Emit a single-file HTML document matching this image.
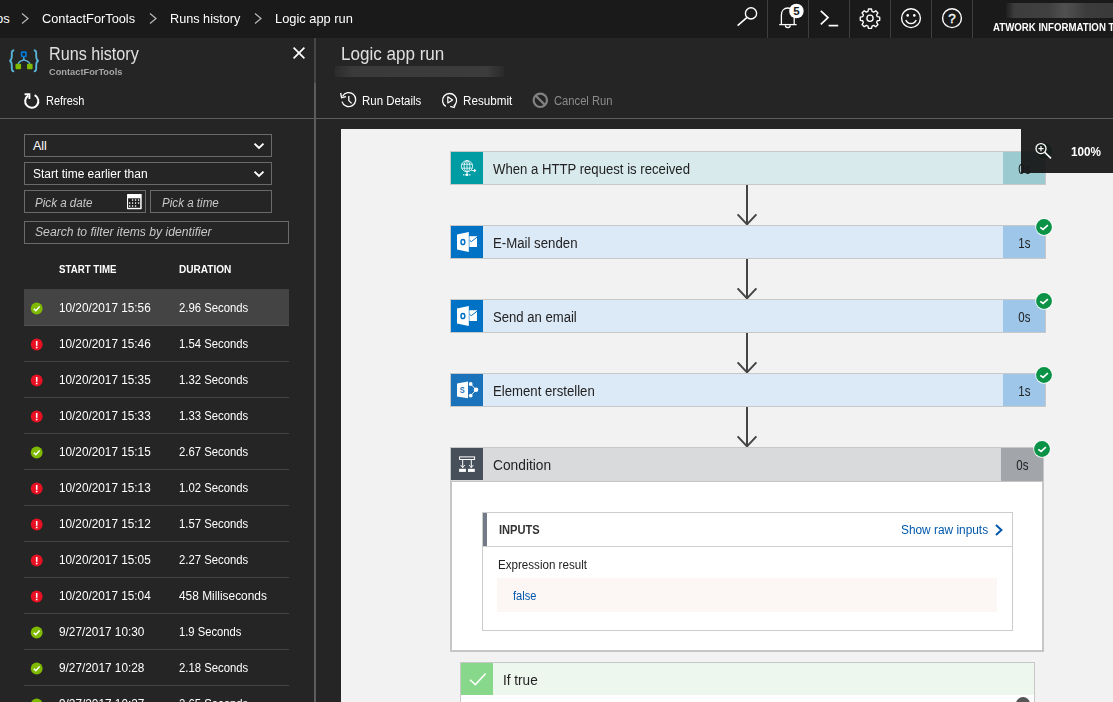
<!DOCTYPE html>
<html>
<head>
<meta charset="utf-8">
<title>Logic app run</title>
<style>
*{box-sizing:border-box;margin:0;padding:0}
html,body{width:1113px;height:702px;overflow:hidden;background:#252525;font-family:"Liberation Sans",sans-serif;color:#fff}
.abs,.t{position:absolute;white-space:nowrap}
.t{line-height:1;transform-origin:0 50%}
#topbar{left:0;top:0;width:1113px;height:38px;background:#1a1a1a}
.bc{font-size:13px;top:11.5px;color:#fff}
.chev{position:absolute;top:12px}
.tsep{position:absolute;top:0;width:1px;height:38px;background:#3e3e3e}
#left{left:0;top:38px;width:314px;height:664px;background:#252525}
#vsep{left:314px;top:38px;width:2px;height:664px;background:#5c5c5c}
#vsep2{left:314px;top:38px;width:2px;height:45px;background:#454545}
#hline{left:0;top:118px;width:1113px;height:1px;background:#5c5c5c}
#canvas{left:341px;top:129px;width:772px;height:573px;background:#f2f2f2;overflow:hidden}
.inp{position:absolute;border:1px solid #6a6a6a;background:#252525;height:22px}
.ph{font-style:italic;color:#c8c8c8;font-size:12px}
.row{position:absolute;left:24px;width:265px;height:36px;border-bottom:1px solid #444}
.row .t{font-size:12px;top:11.5px;color:#fff}
.row.sel{background:#444;border-bottom:1px solid #525252}
.row.sel .t{top:12.5px}
.row.sel svg{margin-top:1px}
.card{position:absolute;left:109px;width:596px;height:34px;border:1px solid #c8c8c8}
.card .ic{position:absolute;left:0;top:0;width:32px;height:32px}
.card .ttl{transform-origin:0 50%;position:absolute;left:42px;top:10px;font-size:14px;color:#222;line-height:1;white-space:nowrap}
.card .dur span,#cd5{display:inline-block;transform-origin:50% 50%;transform:scaleX(.82)}
.card .dur{position:absolute;right:0;top:0;width:42px;height:32px;font-size:14px;color:#222;text-align:center;line-height:34px}
.ok{position:absolute;width:17px;height:17px;border-radius:50%;background:#0a8a43;border:1px solid #fff}
</style>
</head>
<body>
<!-- TOP BAR -->
<div id="topbar" class="abs">
  <span class="t bc" style="left:-4px">os</span>
  <span class="t bc" id="bc1" style="transform:scaleX(0.9836);left:42px">ContactForTools</span>
  <span class="t bc" id="bc2" style="transform:scaleX(0.9744);left:170px">Runs history</span>
  <span class="t bc" id="bc3" style="transform:scaleX(0.9888);left:275px">Logic app run</span>
  <svg class="chev" style="left:19.5px" width="10" height="13" viewBox="0 0 10 13"><path d="M2 1.5 L8 6.5 L2 11.5" fill="none" stroke="#bbb" stroke-width="1.2"/></svg>
  <svg class="chev" style="left:148px" width="10" height="13" viewBox="0 0 10 13"><path d="M2 1.5 L8 6.5 L2 11.5" fill="none" stroke="#bbb" stroke-width="1.2"/></svg>
  <svg class="chev" style="left:253px" width="10" height="13" viewBox="0 0 10 13"><path d="M2 1.5 L8 6.5 L2 11.5" fill="none" stroke="#bbb" stroke-width="1.2"/></svg>

  <div class="tsep" style="left:767px"></div><div class="tsep" style="left:808px"></div><div class="tsep" style="left:849px"></div><div class="tsep" style="left:890px"></div><div class="tsep" style="left:931px"></div><div class="tsep" style="left:972px"></div>
  <svg class="abs" style="left:732px;top:4px" width="32" height="30" viewBox="0 0 32 30"><circle cx="19" cy="9.4" r="5.6" fill="none" stroke="#fff" stroke-width="1.4"/><path d="M14.8 13.6 L5.6 21.6" stroke="#fff" stroke-width="1.6" fill="none"/></svg>
  <svg class="abs" style="left:774px;top:2px" width="34" height="32" viewBox="0 0 34 32"><path d="M7.4 22.6 V13 C7.4 8.6 10.2 6 13.8 6 C17.4 6 20.2 8.6 20.2 13 V22.6" fill="none" stroke="#fff" stroke-width="1.3"/><path d="M5.2 22.6 H22.6" stroke="#fff" stroke-width="1.3"/><path d="M11.4 23.2 A2.4 2.4 0 0 0 16.2 23.2" fill="none" stroke="#fff" stroke-width="1.3"/><circle cx="22.4" cy="9" r="7.3" fill="#fff"/><text x="22.4" y="13" font-family="Liberation Sans, sans-serif" font-size="11.5" font-weight="bold" fill="#1a1a1a" text-anchor="middle">5</text></svg>
  <svg class="abs" style="left:816px;top:6px" width="28" height="24" viewBox="0 0 28 24"><path d="M4.8 4.8 L12 11.6 L4.8 18.4" fill="none" stroke="#fff" stroke-width="1.7"/><path d="M12.6 19.6 H22.2" stroke="#fff" stroke-width="1.7"/></svg>
  <svg class="abs" style="left:859px;top:7px" width="22" height="22" viewBox="0 0 24 24"><g fill="none" stroke="#fff" stroke-width="1.45" stroke-linejoin="round"><path d="M10.3 2.2 h3.4 l.5 2.6 1.9 .8 2.2-1.5 2.4 2.4-1.5 2.2 .8 1.9 2.6 .5 v3.4 l-2.6 .5 -.8 1.9 1.5 2.2 -2.4 2.4 -2.2-1.5 -1.9 .8 -.5 2.6 h-3.4 l-.5-2.6 -1.9-.8 -2.2 1.5 -2.4-2.4 1.5-2.2 -.8-1.9 -2.6-.5 v-3.4 l2.6-.5 .8-1.9 -1.5-2.2 2.4-2.4 2.2 1.5 1.9-.8z"/><circle cx="12" cy="12.2" r="3.4"/></g></svg>
  <svg class="abs" style="left:899px;top:6px" width="24" height="24" viewBox="0 0 24 24"><circle cx="12" cy="12.2" r="9.4" fill="none" stroke="#fff" stroke-width="1.4"/><circle cx="8.7" cy="9.4" r="1.3" fill="#fff"/><circle cx="15.3" cy="9.4" r="1.3" fill="#fff"/><path d="M6.8 14 A5.6 5.6 0 0 0 17.2 14" fill="none" stroke="#fff" stroke-width="1.4"/></svg>
  <svg class="abs" style="left:940px;top:6px" width="24" height="24" viewBox="0 0 24 24"><circle cx="12" cy="12.2" r="9.4" fill="none" stroke="#fff" stroke-width="1.4"/><text x="12" y="17" font-family="Liberation Sans, sans-serif" font-size="13.5" fill="#fff" stroke="#fff" stroke-width=".35" text-anchor="middle">?</text></svg>
  <div class="abs" style="left:1006px;top:3px;width:107px;height:15px;background:linear-gradient(90deg,#1f1f1f 0%,#3d3d3d 8%,#404040 40%,#505050 55%,#4a4a4a 62%,#3c3c3c 75%,#3a3a3a 100%);filter:blur(.6px)"></div>
  <span class="t" id="org" style="left:993px;top:23.2px;font-size:10px;font-weight:bold;color:#fff;transform:scaleX(.966)">ATWORK INFORMATION TECHNOLOGY</span>
</div>

<!-- LEFT BLADE -->

<div id="left" class="abs">
  <!-- logic app icon -->
  <svg class="abs" style="left:6px;top:8px" width="36" height="30" viewBox="0 0 36 30">
    <g fill="none" stroke="#59b4d9" stroke-width="1.9">
      <path d="M8.2 4.2 C5.4 4.2 5.8 6.6 5.8 9.4 C5.8 12.2 5.6 14.4 3.4 14.8 C5.6 15.2 5.8 17.4 5.8 20.2 C5.8 23 5.4 25.4 8.2 25.4"/>
      <path d="M27.8 4.2 C30.6 4.2 30.2 6.6 30.2 9.4 C30.2 12.2 30.4 14.4 32.6 14.8 C30.4 15.2 30.2 17.4 30.2 20.2 C30.2 23 30.6 25.4 27.8 25.4"/>
      <path d="M17.8 10.6 V13.6 M17.8 13.6 C17 15 12.4 14.6 12.3 18 M17.8 13.6 C18.6 15 23.6 14.6 23.7 18" stroke-width="1.4"/>
    </g>
    <rect x="15.6" y="6.1" width="4.4" height="4.4" fill="none" stroke="#0078d7" stroke-width="1.7" rx=".6"/>
    <rect x="9.5" y="17.7" width="5.6" height="5.6" rx="1" fill="#7fba00"/>
    <rect x="21" y="17.7" width="5.6" height="5.6" rx="1" fill="#7fba00"/>
  </svg>
  <span class="t" id="ttl1" style="transform:scaleX(0.8976);left:49px;top:6.8px;font-size:18px;color:#e0e0e0">Runs history</span>
  <span class="t" id="sub1" style="transform:scaleX(0.9748);left:49px;top:29px;font-size:9.5px;font-weight:bold;color:#a6a6a6">ContactForTools</span>
  <svg class="abs" style="left:292px;top:8px" width="14" height="14" viewBox="0 0 14 14"><path d="M1.6 1.6 L12.4 12.4 M12.4 1.6 L1.6 12.4" stroke="#fff" stroke-width="1.7" fill="none"/></svg>
  <!-- refresh -->
  <svg class="abs" style="left:22px;top:53px" width="20" height="20" viewBox="0 0 20 20"><path d="M6.2 4.6 A6.6 6.6 0 1 0 12.6 4.2" fill="none" stroke="#fff" stroke-width="2"/><path d="M2.6 3.2 H7.4 V8" fill="none" stroke="#fff" stroke-width="1.9"/></svg>
  <span class="t" id="refresh" style="transform:scaleX(0.8771);left:45.6px;top:57px;font-size:12.5px">Refresh</span>

  <div class="inp" style="left:24px;top:96px;width:248px;height:23px"><span class="t" id="sel1" style="left:8px;top:5px;font-size:12.5px">All</span>
    <svg class="abs" style="left:228px;top:7px" width="12" height="9" viewBox="0 0 12 9"><path d="M1.5 1.6 L6 5.9 L10.5 1.6" fill="none" stroke="#fff" stroke-width="1.9"/></svg></div>
  <div class="inp" style="left:24px;top:124px;width:248px;height:23px"><span class="t" id="sel2" style="transform:scaleX(0.9590);left:8px;top:5px;font-size:12.5px">Start time earlier than</span>
    <svg class="abs" style="left:228px;top:7px" width="12" height="9" viewBox="0 0 12 9"><path d="M1.5 1.6 L6 5.9 L10.5 1.6" fill="none" stroke="#fff" stroke-width="1.9"/></svg></div>
  <div class="inp" style="left:24px;top:152px;width:122px;height:23px"><span class="t ph" id="pdate" style="transform:scaleX(0.9684);left:10px;top:6px">Pick a date</span>
    <svg class="abs" style="left:102px;top:3px" width="16" height="16" viewBox="0 0 16 16"><rect x="0" y="0" width="14.7" height="15.2" rx=".6" fill="#fff"/><rect x="1.1" y="4.3" width="12.1" height="9.5" fill="#1e1e1e"/><g fill="#fff"><circle cx="5.6" cy="6.1" r=".8"/><circle cx="8.6" cy="6.1" r=".8"/><circle cx="11.6" cy="6.1" r=".8"/><circle cx="2.7" cy="9.1" r=".8"/><circle cx="5.6" cy="9.1" r=".8"/><circle cx="8.6" cy="9.1" r=".8"/><circle cx="11.6" cy="9.1" r=".8"/><circle cx="2.7" cy="12.1" r=".8"/><circle cx="5.6" cy="12.1" r=".8"/><circle cx="8.6" cy="12.1" r=".8"/></g></svg></div>
  <div class="inp" style="left:150px;top:152px;width:122px;height:23px"><span class="t ph" id="ptime" style="transform:scaleX(0.9678);left:11px;top:6px">Pick a time</span></div>
  <div class="inp" style="left:24px;top:183px;width:265px;height:23px"><span class="t ph" id="psearch" style="transform:scaleX(1.0145);left:10px;top:4px">Search to filter items by identifier</span></div>

  <span class="t" id="h1" style="transform:scaleX(0.9242);left:59px;top:226.3px;font-size:10.5px;font-weight:bold">START TIME</span>
  <span class="t" id="h2" style="transform:scaleX(0.9590);left:179px;top:226.3px;font-size:10.5px;font-weight:bold">DURATION</span>
<div class="row sel" style="top:251px;height:37px"><svg class="abs" style="left:6.4px;top:11.5px" width="13" height="13" viewBox="0 0 13 13"><circle cx="6.7" cy="6.5" r="5.9" fill="#7fba00"/><path d="M3.8 6.7 L5.8 8.7 L9.6 4.5" fill="none" stroke="#fff" stroke-width="1.5"/></svg><span class="t" id="d0" style="transform:scaleX(0.9816);left:35px">10/20/2017 15:56</span><span class="t" id="u0" style="transform:scaleX(0.9429);left:155px">2.96 Seconds</span></div>
<div class="row" style="top:288px"><svg class="abs" style="left:6.4px;top:11.5px" width="13" height="13" viewBox="0 0 13 13"><circle cx="6.7" cy="6.5" r="5.9" fill="#e81123"/><rect x="5.9" y="3" width="1.6" height="4.8" fill="#fff"/><rect x="5.9" y="8.7" width="1.6" height="1.6" fill="#fff"/></svg><span class="t" id="d1" style="transform:scaleX(0.9816);left:35px">10/20/2017 15:46</span><span class="t" id="u1" style="transform:scaleX(0.9429);left:155px">1.54 Seconds</span></div>
<div class="row" style="top:324px"><svg class="abs" style="left:6.4px;top:11.5px" width="13" height="13" viewBox="0 0 13 13"><circle cx="6.7" cy="6.5" r="5.9" fill="#e81123"/><rect x="5.9" y="3" width="1.6" height="4.8" fill="#fff"/><rect x="5.9" y="8.7" width="1.6" height="1.6" fill="#fff"/></svg><span class="t" id="d2" style="transform:scaleX(0.9816);left:35px">10/20/2017 15:35</span><span class="t" id="u2" style="transform:scaleX(0.9429);left:155px">1.32 Seconds</span></div>
<div class="row" style="top:360px"><svg class="abs" style="left:6.4px;top:11.5px" width="13" height="13" viewBox="0 0 13 13"><circle cx="6.7" cy="6.5" r="5.9" fill="#e81123"/><rect x="5.9" y="3" width="1.6" height="4.8" fill="#fff"/><rect x="5.9" y="8.7" width="1.6" height="1.6" fill="#fff"/></svg><span class="t" id="d3" style="transform:scaleX(0.9816);left:35px">10/20/2017 15:33</span><span class="t" id="u3" style="transform:scaleX(0.9429);left:155px">1.33 Seconds</span></div>
<div class="row" style="top:396px"><svg class="abs" style="left:6.4px;top:11.5px" width="13" height="13" viewBox="0 0 13 13"><circle cx="6.7" cy="6.5" r="5.9" fill="#7fba00"/><path d="M3.8 6.7 L5.8 8.7 L9.6 4.5" fill="none" stroke="#fff" stroke-width="1.5"/></svg><span class="t" id="d4" style="transform:scaleX(0.9816);left:35px">10/20/2017 15:15</span><span class="t" id="u4" style="transform:scaleX(0.9429);left:155px">2.67 Seconds</span></div>
<div class="row" style="top:432px"><svg class="abs" style="left:6.4px;top:11.5px" width="13" height="13" viewBox="0 0 13 13"><circle cx="6.7" cy="6.5" r="5.9" fill="#e81123"/><rect x="5.9" y="3" width="1.6" height="4.8" fill="#fff"/><rect x="5.9" y="8.7" width="1.6" height="1.6" fill="#fff"/></svg><span class="t" id="d5" style="transform:scaleX(0.9816);left:35px">10/20/2017 15:13</span><span class="t" id="u5" style="transform:scaleX(0.9429);left:155px">1.02 Seconds</span></div>
<div class="row" style="top:468px"><svg class="abs" style="left:6.4px;top:11.5px" width="13" height="13" viewBox="0 0 13 13"><circle cx="6.7" cy="6.5" r="5.9" fill="#e81123"/><rect x="5.9" y="3" width="1.6" height="4.8" fill="#fff"/><rect x="5.9" y="8.7" width="1.6" height="1.6" fill="#fff"/></svg><span class="t" id="d6" style="transform:scaleX(0.9816);left:35px">10/20/2017 15:12</span><span class="t" id="u6" style="transform:scaleX(0.9429);left:155px">1.57 Seconds</span></div>
<div class="row" style="top:504px"><svg class="abs" style="left:6.4px;top:11.5px" width="13" height="13" viewBox="0 0 13 13"><circle cx="6.7" cy="6.5" r="5.9" fill="#e81123"/><rect x="5.9" y="3" width="1.6" height="4.8" fill="#fff"/><rect x="5.9" y="8.7" width="1.6" height="1.6" fill="#fff"/></svg><span class="t" id="d7" style="transform:scaleX(0.9816);left:35px">10/20/2017 15:05</span><span class="t" id="u7" style="transform:scaleX(0.9429);left:155px">2.27 Seconds</span></div>
<div class="row" style="top:540px"><svg class="abs" style="left:6.4px;top:11.5px" width="13" height="13" viewBox="0 0 13 13"><circle cx="6.7" cy="6.5" r="5.9" fill="#e81123"/><rect x="5.9" y="3" width="1.6" height="4.8" fill="#fff"/><rect x="5.9" y="8.7" width="1.6" height="1.6" fill="#fff"/></svg><span class="t" id="d8" style="transform:scaleX(0.9816);left:35px">10/20/2017 15:04</span><span class="t" id="u8" style="transform:scaleX(0.9908);left:155px">458 Milliseconds</span></div>
<div class="row" style="top:576px"><svg class="abs" style="left:6.4px;top:11.5px" width="13" height="13" viewBox="0 0 13 13"><circle cx="6.7" cy="6.5" r="5.9" fill="#7fba00"/><path d="M3.8 6.7 L5.8 8.7 L9.6 4.5" fill="none" stroke="#fff" stroke-width="1.5"/></svg><span class="t" id="d9" style="transform:scaleX(0.9844);left:35px">9/27/2017 10:30</span><span class="t" id="u9" style="transform:scaleX(0.9353);left:155px">1.9 Seconds</span></div>
<div class="row" style="top:612px"><svg class="abs" style="left:6.4px;top:11.5px" width="13" height="13" viewBox="0 0 13 13"><circle cx="6.7" cy="6.5" r="5.9" fill="#7fba00"/><path d="M3.8 6.7 L5.8 8.7 L9.6 4.5" fill="none" stroke="#fff" stroke-width="1.5"/></svg><span class="t" id="d10" style="transform:scaleX(0.9844);left:35px">9/27/2017 10:28</span><span class="t" id="u10" style="transform:scaleX(0.9429);left:155px">2.18 Seconds</span></div>
<div class="row" style="top:648px"><svg class="abs" style="left:6.4px;top:11.5px" width="13" height="13" viewBox="0 0 13 13"><circle cx="6.7" cy="6.5" r="5.9" fill="#7fba00"/><path d="M3.8 6.7 L5.8 8.7 L9.6 4.5" fill="none" stroke="#fff" stroke-width="1.5"/></svg><span class="t" id="d11" style="transform:scaleX(0.9844);left:35px">9/27/2017 10:27</span><span class="t" id="u11" style="transform:scaleX(0.9429);left:155px">2.65 Seconds</span></div>
</div>

<div id="vsep" class="abs"></div>
<div id="vsep2" class="abs"></div>
<div id="hline" class="abs"></div>

<!-- CANVAS -->

<!-- RIGHT BLADE HEADER -->
<span class="t" id="ttl2" style="transform:scaleX(0.9469);left:341px;top:44.9px;font-size:18px;color:#e0e0e0">Logic app run</span>
<div class="abs" style="left:335px;top:66px;width:169px;height:11px;background:linear-gradient(90deg,#2c2c2c,#3a3a3a 10%,#3c3c3c 90%,#2a2a2a);filter:blur(.5px)"></div>
<svg class="abs" style="left:339px;top:91px" width="20" height="19" viewBox="0 0 20 19"><path d="M3.6 5.2 A7 7 0 1 1 3 10.6" fill="none" stroke="#fff" stroke-width="1.3"/><path d="M1.6 2 L2.6 6.6 L7 5.6" fill="none" stroke="#fff" stroke-width="1.3"/><path d="M9.8 5 V9.6 L12.6 12.4" fill="none" stroke="#fff" stroke-width="1.3"/></svg>
<span class="t" id="a1" style="transform:scaleX(0.9176);left:362px;top:95px;font-size:12.5px">Run Details</span>
<svg class="abs" style="left:440px;top:91px" width="20" height="19" viewBox="0 0 20 19"><path d="M5.8 15.4 A7 7 0 1 1 13.6 15.2" fill="none" stroke="#fff" stroke-width="1.3"/><path d="M15.6 12.4 L14.2 16.6 L10.2 15.4" fill="none" stroke="#fff" stroke-width="1.2"/><path d="M7.8 5.8 V12 L12.6 8.9 Z" fill="none" stroke="#fff" stroke-width="1.2" stroke-linejoin="round"/></svg>
<span class="t" id="a2" style="transform:scaleX(0.9338);left:463px;top:95px;font-size:12.5px">Resubmit</span>
<svg class="abs" style="left:531px;top:91px" width="19" height="19" viewBox="0 0 19 19"><circle cx="9.3" cy="9.3" r="6.7" fill="none" stroke="#828282" stroke-width="2.2"/><path d="M4.6 4.6 L14 14" stroke="#828282" stroke-width="2.2"/></svg>
<span class="t" id="a3" style="transform:scaleX(0.8955);left:553.5px;top:95px;font-size:12.5px;color:#8c8c8c">Cancel Run</span>
<div id="canvas" class="abs">
<div class="card" style="top:22px;background:#d9eaed"><div class="ic" style="background:#009ca3"><svg width="32" height="32" viewBox="0 0 32 32"><g fill="none" stroke="#fff" stroke-width=".8"><circle cx="16" cy="14.2" r="5.6"/><ellipse cx="16" cy="14.2" rx="2.9" ry="5.6"/><path d="M10.6 12.2 H21.4 M10.6 16.2 H21.4 M16 8.6 V22"/></g><path d="M20.4 18.6 H24" stroke="#fff" stroke-width=".9"/><path d="M23 16.8 L25.4 18.6 L23 20.4Z" fill="#fff"/><path d="M12.2 22.8 H19.8" stroke="#fff" stroke-width="1.2" stroke-dasharray="1.2 .8"/><circle cx="16" cy="22.8" r="1.2" fill="#fff"/></svg></div><span class="ttl" id="c1" style="transform:scaleX(0.9388)">When a HTTP request is received</span><div class="dur" style="background:#9bcbd1"><span id="cd1">0s</span></div></div>
<svg class="abs" style="left:693px;top:12.3px" width="20" height="20" viewBox="0 0 20 20"><circle cx="10" cy="10" r="8.7" fill="#fff"/><circle cx="10" cy="10" r="7.95" fill="#0a9347"/><path d="M6.3 10.3 L9.1 12.5 L13.9 8.2" fill="none" stroke="#fff" stroke-width="1.7"/></svg>
<svg class="abs" style="left:394px;top:56px" width="24" height="41" viewBox="0 0 24 41"><path d="M12 0 V39" stroke="#444" stroke-width="2"/><path d="M2.6 29.4 L12 39.4 L21.4 29.4" fill="none" stroke="#444" stroke-width="2"/></svg>
<div class="card" style="top:96px;background:#dce9f6"><div class="ic" style="background:#0072c6"><svg width="32" height="32" viewBox="0 0 32 32"><path d="M6 8.4 L17.8 6 V26 L6 23.6Z" fill="#fff"/><rect x="18.4" y="10.2" width="7.6" height="10.8" fill="#fff"/><path d="M18.6 14.4 L20.4 15.6 L26 11.2" fill="none" stroke="#0072c6" stroke-width="1"/><ellipse cx="11.9" cy="16" rx="1.9" ry="2.6" fill="none" stroke="#0072c6" stroke-width="1.5"/></svg></div><span class="ttl" id="c2" style="transform:scaleX(0.9441)">E-Mail senden</span><div class="dur" style="background:#9dc6e9"><span id="cd2">1s</span></div></div>
<svg class="abs" style="left:693px;top:88.3px" width="20" height="20" viewBox="0 0 20 20"><circle cx="10" cy="10" r="8.7" fill="#fff"/><circle cx="10" cy="10" r="7.95" fill="#0a9347"/><path d="M6.3 10.3 L9.1 12.5 L13.9 8.2" fill="none" stroke="#fff" stroke-width="1.7"/></svg>
<svg class="abs" style="left:394px;top:130px" width="24" height="41" viewBox="0 0 24 41"><path d="M12 0 V39" stroke="#444" stroke-width="2"/><path d="M2.6 29.4 L12 39.4 L21.4 29.4" fill="none" stroke="#444" stroke-width="2"/></svg>
<div class="card" style="top:170px;background:#dce9f6"><div class="ic" style="background:#0072c6"><svg width="32" height="32" viewBox="0 0 32 32"><path d="M6 8.4 L17.8 6 V26 L6 23.6Z" fill="#fff"/><rect x="18.4" y="10.2" width="7.6" height="10.8" fill="#fff"/><path d="M18.6 14.4 L20.4 15.6 L26 11.2" fill="none" stroke="#0072c6" stroke-width="1"/><ellipse cx="11.9" cy="16" rx="1.9" ry="2.6" fill="none" stroke="#0072c6" stroke-width="1.5"/></svg></div><span class="ttl" id="c3" style="transform:scaleX(0.9361)">Send an email</span><div class="dur" style="background:#9dc6e9"><span id="cd3">0s</span></div></div>
<svg class="abs" style="left:693px;top:162.3px" width="20" height="20" viewBox="0 0 20 20"><circle cx="10" cy="10" r="8.7" fill="#fff"/><circle cx="10" cy="10" r="7.95" fill="#0a9347"/><path d="M6.3 10.3 L9.1 12.5 L13.9 8.2" fill="none" stroke="#fff" stroke-width="1.7"/></svg>
<svg class="abs" style="left:394px;top:204px" width="24" height="41" viewBox="0 0 24 41"><path d="M12 0 V39" stroke="#444" stroke-width="2"/><path d="M2.6 29.4 L12 39.4 L21.4 29.4" fill="none" stroke="#444" stroke-width="2"/></svg>
<div class="card" style="top:244px;background:#dce9f6"><div class="ic" style="background:#1a73ba"><svg width="32" height="32" viewBox="0 0 32 32"><path d="M19.6 10 L25.2 15.8 L19.6 21.6" fill="none" stroke="#fff" stroke-width=".9"/><circle cx="19.7" cy="10" r="1.9" fill="#fff"/><circle cx="19.7" cy="21.6" r="1.9" fill="#fff"/><circle cx="25" cy="15.8" r="2.3" fill="#fff"/><path d="M6 9.4 L17 7.4 V24.2 L6 22.6Z" fill="#fff"/><text transform="translate(11.3 19) scale(.8 1)" x="0" y="0" font-family="Liberation Sans, sans-serif" font-size="9.2" font-weight="bold" fill="#1a73ba" text-anchor="middle">S</text></svg></div><span class="ttl" id="c4" style="transform:scaleX(0.9402)">Element erstellen</span><div class="dur" style="background:#9dc6e9"><span id="cd4">1s</span></div></div>
<svg class="abs" style="left:693px;top:236.3px" width="20" height="20" viewBox="0 0 20 20"><circle cx="10" cy="10" r="8.7" fill="#fff"/><circle cx="10" cy="10" r="7.95" fill="#0a9347"/><path d="M6.3 10.3 L9.1 12.5 L13.9 8.2" fill="none" stroke="#fff" stroke-width="1.7"/></svg>
<svg class="abs" style="left:394px;top:278px" width="24" height="41" viewBox="0 0 24 41"><path d="M12 0 V39" stroke="#444" stroke-width="2"/><path d="M2.6 29.4 L12 39.4 L21.4 29.4" fill="none" stroke="#444" stroke-width="2"/></svg>
<div class="abs" style="left:109px;top:318px;width:594px;height:205px;background:#fff;border:2px solid #c6c6c6;border-top:1px solid #c8c8c8"></div>
<div class="abs" style="left:110px;top:319px;width:592px;height:34px;background:#d9dadc;border-bottom:1px solid #c4c4c4"></div>
<div class="abs" style="left:110px;top:319px;width:32px;height:32px;background:#474f5a"><svg width="32" height="32" viewBox="0 0 32 32"><rect x="8.6" y="8.9" width="15" height="2.6" fill="none" stroke="#fff" stroke-width="1"/><path d="M11.7 11.6 V19.6 M20.3 11.6 V19.6" stroke="#fff" stroke-width="1"/><path d="M9.6 17 L11.7 19.6 L13.8 17 M18.2 17 L20.3 19.6 L22.4 17" fill="none" stroke="#fff" stroke-width=".9"/><rect x="8.1" y="20.8" width="6.8" height="3.1" fill="#fff"/><rect x="17" y="20.8" width="6.8" height="3.1" fill="#fff"/></svg></div>
<span class="t" id="c5" style="transform:scaleX(0.9838);left:152px;top:329px;font-size:14px;color:#222">Condition</span>
<div class="abs" style="left:660px;top:319px;width:42px;height:33px;background:#a2a5a9;color:#222;font-size:14px;text-align:center;line-height:35px"><span id="cd5">0s</span></div>
<svg class="abs" style="left:691px;top:310.3px" width="20" height="20" viewBox="0 0 20 20"><circle cx="10" cy="10" r="8.7" fill="#fff"/><circle cx="10" cy="10" r="7.95" fill="#0a9347"/><path d="M6.3 10.3 L9.1 12.5 L13.9 8.2" fill="none" stroke="#fff" stroke-width="1.7"/></svg>

<div class="abs" style="left:141px;top:383px;width:531px;height:119px;background:#fff;border:1px solid #ccc"></div>
<div class="abs" style="left:142px;top:384px;width:4px;height:33px;background:#737b87"></div>
<div class="abs" style="left:142px;top:417px;width:529px;height:1px;background:#d0d0d0"></div>
<span class="t" id="inputs" style="transform:scaleX(0.9269);left:157.5px;top:395px;font-size:12px;font-weight:bold;color:#333">INPUTS</span>
<span class="t" id="raw" style="transform:scaleX(0.9892);left:560px;top:395px;font-size:12px;color:#0058ad">Show raw inputs</span>
<svg class="abs" style="left:653px;top:395px" width="10" height="12" viewBox="0 0 10 12"><path d="M2 1 L7.4 6 L2 11" fill="none" stroke="#0058ad" stroke-width="2"/></svg>
<span class="t" id="expr" style="transform:scaleX(0.9669);left:156.5px;top:430px;font-size:12px;color:#222">Expression result</span>
<div class="abs" style="left:156px;top:449px;width:500px;height:34px;background:#fcf6f5"></div>
<span class="t" id="false" style="transform:scaleX(0.9227);left:171.5px;top:461px;font-size:12px;color:#0058ad">false</span>
<!-- If true -->
<div class="abs" style="left:119px;top:533px;width:575px;height:60px;background:#fff;border:1px solid #c8c8c8"></div>
<div class="abs" style="left:120px;top:534px;width:573px;height:32px;background:#edf7ee"></div>
<div class="abs" style="left:120px;top:534px;width:32px;height:32px;background:#88d88c"><svg width="32" height="32" viewBox="0 0 32 32"><path d="M9 16.8 L14.4 21.6 L24.6 10.6" fill="none" stroke="#fff" stroke-width="1.5"/></svg></div>
<span class="t" id="iftrue" style="transform:scaleX(0.9694);left:162px;top:544px;font-size:14px;color:#222">If true</span>
<div class="abs" style="left:675px;top:567.5px;width:14px;height:14px;border-radius:50%;background:#555"></div>
<!-- zoom overlay -->
<div class="abs" style="left:680px;top:0;width:92px;height:43.5px;background:rgba(23,23,23,.94)"></div>
<svg class="abs" style="left:692px;top:11px" width="22" height="22" viewBox="0 0 22 22"><circle cx="8" cy="8.6" r="5" fill="none" stroke="#fff" stroke-width="1.3"/><path d="M11.8 12.4 L18 18.4" stroke="#fff" stroke-width="1.5"/><path d="M5.4 8.6 H10.6 M8 6 V11.2" stroke="#fff" stroke-width="1.2"/></svg>
<span class="t" id="zoom" style="transform:scaleX(0.9771);left:730px;top:16.7px;font-size:12px;font-weight:bold;color:#fff">100%</span>
</div>
</body>
</html>
